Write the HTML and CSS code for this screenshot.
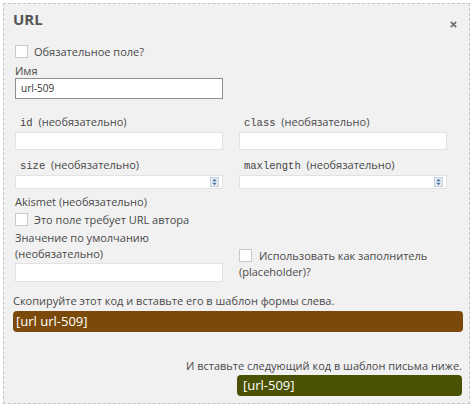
FILE: index.html
```html
<!DOCTYPE html>
<html lang="ru">
<head>
<meta charset="utf-8">
<title>URL</title>
<link rel="stylesheet" href="styles.css">
</head>
<body>
<div class="dialog">
  <div class="head">
    <h2 class="title">URL</h2>
    <span class="close"><svg width="7" height="7" viewBox="0 0 7 7"><path d="M0.8 0.8L6.2 6.2M6.2 0.8L0.8 6.2" stroke="#707070" stroke-width="1.7" fill="none"/></svg></span>
  </div>
  <div class="form">
    <div class="check"><span class="box"></span><span>Обязательное поле?</span></div>
    <div class="lbl name-l">Имя</div>
    <div class="input dark">url-509</div>
    <div class="grid">
      <div class="field">
        <div class="lbl mono-l"><code>id</code> (необязательно)</div>
        <div class="input tall"></div>
      </div>
      <div class="field">
        <div class="lbl mono-l"><code>class</code> (необязательно)</div>
        <div class="input tall"></div>
      </div>
      <div class="field">
        <div class="lbl mono-l"><code>size</code> (необязательно)</div>
        <div class="input num"><span class="spin"><svg width="9" height="10" viewBox="0 0 9 10"><rect x="0.5" y="0.5" width="8" height="9" fill="#e9eef5" stroke="#c5d0de"/><path d="M4.5 1.8L6.8 4.2H2.2Z M4.5 8.2L6.8 5.8H2.2Z" fill="#4f73a6"/></svg></span></div>
      </div>
      <div class="field">
        <div class="lbl mono-l"><code>maxlength</code> (необязательно)</div>
        <div class="input num"><span class="spin"><svg width="9" height="10" viewBox="0 0 9 10"><rect x="0.5" y="0.5" width="8" height="9" fill="#e9eef5" stroke="#c5d0de"/><path d="M4.5 1.8L6.8 4.2H2.2Z M4.5 8.2L6.8 5.8H2.2Z" fill="#4f73a6"/></svg></span></div>
      </div>
    </div>
    <div class="lbl akismet">Akismet (необязательно)</div>
    <div class="check c2"><span class="box"></span><span>Это поле требует URL автора</span></div>
    <div class="grid bottom">
      <div class="field">
        <div class="lbl">Значение по умолчанию<br>(необязательно)</div>
        <div class="input tall2"></div>
      </div>
      <div class="field ph">
        <div class="check c3"><span class="box"></span><span>Использовать как заполнитель</span></div>
        <div class="lbl">(placeholder)?</div>
      </div>
    </div>
  </div>
  <div class="tags">
    <div class="hint">Скопируйте этот код и вставьте его в шаблон формы слева.</div>
    <div class="code brown">[url url-509]</div>
    <div class="mail">
      <div class="hint">И вставьте следующий код в шаблон письма ниже.</div>
      <div class="code green">[url-509]</div>
    </div>
  </div>
</div>
</body>
</html>
```

FILE: styles.css
```css
* { box-sizing: border-box; }
html, body { margin: 0; padding: 0; background: #fff; }
body {
  font-family: "Open Sans", "Liberation Sans", sans-serif;
  font-size: 11px;
  color: #4a4a4a;
}
.dialog {
  margin: 3px 0 0 3px;
  width: 467px;
  height: 401px;
  border: 1px dashed #c4c4c4;
  background: #f1f1f1;
  display: flex;
  flex-direction: column;
}
.head {
  display: flex;
  justify-content: space-between;
  align-items: flex-start;
  padding: 4px 12px 0 9px;
  height: 39px;
  flex: none;
}
.title {
  margin: 0;
  font-size: 15px;
  font-weight: 700;
  color: #555;
  line-height: 22px;
}
.close { display: flex; padding-top: 13px; }
.form { padding: 0 22px 0 11px; }
.check { display: flex; align-items: center; gap: 6px; height: 17px; line-height: 17px; }
.box {
  width: 13px; height: 13px;
  background: #fff;
  border: 1px solid #c9c9c9;
  flex: none;
}
.lbl { line-height: 16px; }
.name-l { margin-top: 4px; line-height: 14px; }
.input {
  background: #fff;
  border: 1px solid #e2e2e2;
  height: 18px;
  width: 208px;
}
.input.dark {
  border-color: #8f8f8f;
  height: 21px;
  font-size: 10px;
  line-height: 19px;
  padding-left: 5px;
  color: #333;
}
.grid {
  display: grid;
  grid-template-columns: 208px 207px;
  column-gap: 16px;
  row-gap: 7px;
  margin-top: 15px;
}
.mono-l { padding-left: 5px; margin-bottom: 1px; }
code {
  font-family: "Liberation Mono", monospace;
  font-size: 10.5px;
  color: #444;
  margin-right: 3px;
}
.input.tall { height: 18px; }
.input.num {
  height: 14px;
  position: relative;
}
.spin {
  position: absolute;
  right: 3px; top: 1px;
  display: flex;
}
.akismet { margin-top: 5px; }
.c2 { margin-top: 1px; }
.bottom { margin-top: 2px; row-gap: 0; }
.input.tall2 { height: 19px; margin-top: 1px; }
.ph { padding-top: 17px; }
.ph .check { gap: 7px; }
.tags { padding: 11px 6px 0 9px; }
.hint { line-height: 16px; color: #4a4a4a; }
.code {
  margin-top: 2px;
  height: 21px;
  border-radius: 4px;
  color: #fff;
  font-size: 13px;
  line-height: 21px;
  padding-left: 3px;
}
.brown { background: #7b4a0a; }
.mail {
  margin-top: 26px;
  display: flex;
  flex-direction: column;
  align-items: flex-end;
  padding-right: 1px;
}
.green { background: #4a5103; width: 225px; margin-top: 1px; padding-left: 6px; }
```
